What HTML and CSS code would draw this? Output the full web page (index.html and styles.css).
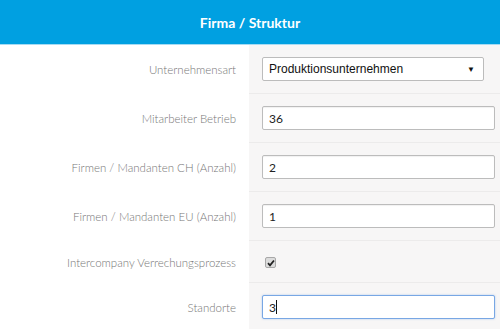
FILE: index.html
```html
<!DOCTYPE html>
<html lang="de">
<head>
    <meta charset="UTF-8">
    <meta name="viewport" content="width=device-width, initial-scale=1.0">
    <title>Firma / Struktur</title>
    <link rel="stylesheet" href="styles.css">
</head>
<body>
    <div class="header">Firma / Struktur</div>
    <div class="form">
        <div class="row">
            <label class="label" for="art">Unternehmensart</label>
            <div class="field">
                <div class="select-wrap">
                    <select id="art">
                        <option>Produktionsunternehmen</option>
                    </select>
                    <span class="arrow">&#9660;</span>
                </div>
            </div>
        </div>
        <div class="row">
            <label class="label" for="ma">Mitarbeiter Betrieb</label>
            <div class="field"><input type="text" id="ma" value="36"></div>
        </div>
        <div class="row">
            <label class="label" for="ch">Firmen / Mandanten CH (Anzahl)</label>
            <div class="field"><input type="text" id="ch" value="2"></div>
        </div>
        <div class="row">
            <label class="label" for="eu">Firmen / Mandanten EU (Anzahl)</label>
            <div class="field"><input type="text" id="eu" value="1"></div>
        </div>
        <div class="row row-check">
            <label class="label" for="ic">Intercompany Verrechungsprozess</label>
            <div class="field">
                <span class="check" id="ic">
                    <svg width="8" height="8" viewBox="0 0 8 8"><path d="M1 4.2 L3 6.3 L7 1.5" fill="none" stroke="#222" stroke-width="1.8"/></svg>
                </span>
            </div>
        </div>
        <div class="row">
            <label class="label" for="st">Standorte</label>
            <div class="field">
                <div class="input-wrap">
                    <input type="text" id="st" class="focused" value="3">
                    <span class="caret"></span>
                </div>
            </div>
        </div>
    </div>
</body>
</html>
```

FILE: styles.css
```css
body {
    margin: 0;
    font-family: Lato, "Open Sans", sans-serif;
    background-color: #ffffff;
    color: #333;
}
.header {
    background-color: #00a0e1;
    color: #ffffff;
    height: 44px;
    line-height: 46px;
    text-align: center;
    font-size: 14px;
    font-weight: bold;
    border-bottom: 1px solid #a6dbf3;
}
.row {
    display: grid;
    grid-template-columns: 249px 1fr;
}
.label {
    text-align: right;
    padding-right: 13px;
    font-size: 11.5px;
    font-weight: 300;
    color: #777;
    align-self: center;
}
.field {
    background-color: #f7f6f6;
    padding: 12px 5px 12px 13px;
    border-bottom: 1px solid #ecebeb;
}
.row-check .field {
    padding: 13px 5px 12px 16px;
    height: 16px;
}
input[type="text"] {
    display: block;
    box-sizing: border-box;
    width: 100%;
    height: 24px;
    padding: 0 6px;
    border: 1px solid #bcbcbc;
    border-radius: 2px;
    background-color: #ffffff;
    font-family: Lato, sans-serif;
    font-size: 12px;
    color: #222;
    box-shadow: inset 0 1px 1px rgba(0, 0, 0, 0.06);
    outline: none;
}
input.focused {
    border-color: #78a7e4;
    box-shadow: 0 0 2px rgba(90, 150, 230, 0.5);
}
.input-wrap {
    position: relative;
}
.caret {
    position: absolute;
    left: 14px;
    top: 5px;
    width: 1px;
    height: 14px;
    background-color: #111;
}
.select-wrap {
    position: relative;
    width: 222px;
}
select {
    display: block;
    width: 100%;
    height: 24px;
    padding: 0 6px;
    border: 1px solid #bcbcbc;
    border-radius: 2px;
    background-color: #ffffff;
    font-family: "Liberation Sans", Arial, sans-serif;
    font-size: 12px;
    color: #111;
    -webkit-appearance: none;
    appearance: none;
    outline: none;
}
.arrow {
    position: absolute;
    right: 9px;
    top: 7px;
    font-size: 8px;
    color: #111;
    pointer-events: none;
}
.check {
    display: flex;
    align-items: center;
    justify-content: center;
    width: 9px;
    height: 9px;
    margin-top: 3px;
    border: 1px solid #a8a8a8;
    border-radius: 2px;
    background-color: #dcdcdc;
}
```
